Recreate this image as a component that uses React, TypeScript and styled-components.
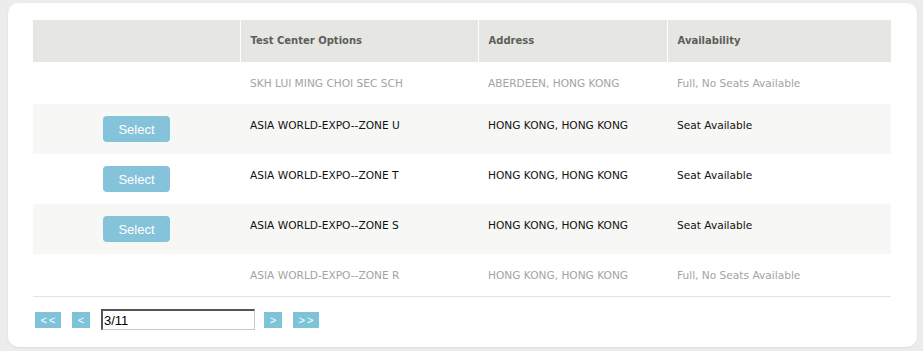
import { FunctionComponent } from "react";
import styled, { createGlobalStyle } from "styled-components";

const GlobalStyle = createGlobalStyle`
  html, body {
    margin: 0;
    padding: 0;
    background: #ececec;
  }
`;

const Page = styled.div`
  padding: 3px 6px 4px 8px;
  font-family: "DejaVu Sans", Verdana, sans-serif;
`;

const Card = styled.div`
  background: #ffffff;
  border-radius: 10px;
  box-shadow: 0 1px 2px rgba(0, 0, 0, 0.08);
  padding: 17px 26px 19px 25px;
  height: 344px;
  box-sizing: border-box;
`;

const Table = styled.table`
  width: 858px;
  border-collapse: collapse;
  table-layout: fixed;
  font-size: 10.6px;
`;

const HeadCell = styled.th<{ $w: number }>`
  box-sizing: border-box;
  width: ${(p) => p.$w}px;
  background: #e6e6e2;
  color: #5a5f5a;
  font-size: 10px;
  font-weight: bold;
  text-align: left;
  padding: 12px 10px;
  line-height: 18px;
  border-left: 1px solid #ffffff;
  &:first-child {
    border-left: none;
  }
`;

const Row = styled.tr<{ $shade: boolean }>`
  background: ${(p) => (p.$shade ? "#f7f7f5" : "#ffffff")};
`;

const Cell = styled.td<{ $full: boolean }>`
  padding: 12px 10px;
  line-height: 18px;
  vertical-align: top;
  color: ${(p) => (p.$full ? "#a3a3a3" : "#111111")};
  white-space: nowrap;
  overflow: hidden;
`;

const ButtonCell = styled.td`
  padding: 12px 10px;
  vertical-align: top;
  text-align: center;
`;

const SelectButton = styled.button`
  width: 67px;
  height: 26px;
  border: none;
  border-radius: 4px;
  background: #85c3db;
  color: #ffffff;
  font-family: "Liberation Sans", Arial, sans-serif;
  font-size: 13px;
  padding: 0;
  cursor: pointer;
`;

const Footer = styled.div`
  border-top: 1px solid #e3e3e3;
  width: 858px;
  display: flex;
  align-items: center;
  padding: 12px 0 0 2px;
  box-sizing: border-box;
`;

const PageButton = styled.button<{ $w: number; $gap: number }>`
  width: ${(p) => p.$w}px;
  height: 16px;
  margin-right: ${(p) => p.$gap}px;
  border: none;
  background: #7fc3d9;
  color: #ffffff;
  font-family: "Liberation Sans", Arial, sans-serif;
  font-size: 11px;
  letter-spacing: 2px;
  text-indent: 2px;
  padding: 0;
  line-height: 16px;
`;

const PageInput = styled.input`
  width: 154px;
  height: 21px;
  box-sizing: border-box;
  margin-right: 9px;
  border: 1px solid #c8c8c8;
  border-top: 2px solid #555555;
  border-left: 2px solid #555555;
  padding: 0 1px;
  font-family: "Liberation Sans", Arial, sans-serif;
  font-size: 13px;
  color: #000000;
`;

type Center = {
  name: string;
  address: string;
  status: string;
  open: boolean;
};

const centers: Center[] = [
  { name: "SKH LUI MING CHOI SEC SCH", address: "ABERDEEN, HONG KONG", status: "Full, No Seats Available", open: false },
  { name: "ASIA WORLD-EXPO--ZONE U", address: "HONG KONG, HONG KONG", status: "Seat Available", open: true },
  { name: "ASIA WORLD-EXPO--ZONE T", address: "HONG KONG, HONG KONG", status: "Seat Available", open: true },
  { name: "ASIA WORLD-EXPO--ZONE S", address: "HONG KONG, HONG KONG", status: "Seat Available", open: true },
  { name: "ASIA WORLD-EXPO--ZONE R", address: "HONG KONG, HONG KONG", status: "Full, No Seats Available", open: false },
];

const App: FunctionComponent = () => {
  return (
    <Page>
      <GlobalStyle />
      <Card>
        <Table>
          <thead>
            <tr>
              <HeadCell $w={207}></HeadCell>
              <HeadCell $w={238}>Test Center Options</HeadCell>
              <HeadCell $w={189}>Address</HeadCell>
              <HeadCell $w={224}>Availability</HeadCell>
            </tr>
          </thead>
          <tbody>
            {centers.map((c, i) => (
              <Row key={c.name} $shade={i % 2 === 1}>
                <ButtonCell>{c.open && <SelectButton>Select</SelectButton>}</ButtonCell>
                <Cell $full={!c.open}>{c.name}</Cell>
                <Cell $full={!c.open}>{c.address}</Cell>
                <Cell $full={!c.open}>{c.status}</Cell>
              </Row>
            ))}
          </tbody>
        </Table>
        <Footer>
          <PageButton $w={26} $gap={11}>&lt;&lt;</PageButton>
          <PageButton $w={18} $gap={11}>&lt;</PageButton>
          <PageInput defaultValue="3/11" />
          <PageButton $w={18} $gap={11}>&gt;</PageButton>
          <PageButton $w={26} $gap={0}>&gt;&gt;</PageButton>
        </Footer>
      </Card>
    </Page>
  );
};

export default App;
